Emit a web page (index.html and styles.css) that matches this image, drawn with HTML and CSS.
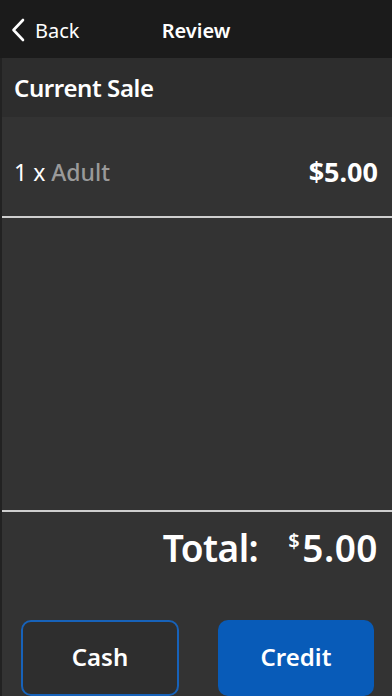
FILE: index.html
```html
<!DOCTYPE html>
<html lang="en">

<head>
    <meta charset="utf-8">
    <title>Review</title>
    <link rel="stylesheet" href="styles.css">
</head>

<body>
    <div class="screen">
        <!-- 顶部导航 -->
        <div class="navBar">
            <div class="back">
                <svg class="chevron" width="14" height="24" viewBox="0 0 14 24">
                    <path d="M12 2 L2.5 12 L12 22" fill="none" stroke="#fff" stroke-width="2.6" stroke-linecap="round" stroke-linejoin="round" />
                </svg>
                <span>Back</span>
            </div>
            <div class="title">Review</div>
        </div>
        <!-- 内容 -->
        <div class="content">
            <div class="saleHead">Current Sale</div>
            <div class="item">
                <div class="itemName">1 x <span class="type">Adult</span></div>
                <div class="itemPrice">$5.00</div>
            </div>
            <div class="spacer"></div>
            <div class="total">
                <span class="label">Total:</span>
                <span class="amount"><sup>$</sup>5.00</span>
            </div>
            <div class="buttons">
                <div class="btn cash">Cash</div>
                <div class="btn credit">Credit</div>
            </div>
        </div>
    </div>
</body>

</html>
```

FILE: styles.css
```css
* {
    margin: 0;
    padding: 0;
    box-sizing: border-box;
}

html,
body {
    width: 392px;
    height: 696px;
    overflow: hidden;
    background: #333;
    font-family: "Noto Sans", "Open Sans", sans-serif;
    color: #fff;
}

.screen {
    height: 696px;
    display: flex;
    flex-direction: column;
}

.navBar {
    height: 58px;
    background: #1b1b1b;
    position: relative;
    display: flex;
    align-items: center;
    flex-shrink: 0;
    padding-top: 2px;
}

.navBar .back {
    display: flex;
    align-items: center;
    padding-left: 11px;
    font-size: 20px;
    gap: 10px;
}

.navBar .title {
    position: absolute;
    left: 0;
    right: 0;
    text-align: center;
    font-size: 20px;
    font-weight: 600;
    pointer-events: none;
}

.content {
    flex: 1;
    display: flex;
    flex-direction: column;
    border-left: 2px solid #222;
}

.saleHead {
    height: 59px;
    background: #2d2d2d;
    padding-left: 12px;
    display: flex;
    align-items: center;
    font-size: 24px;
    font-weight: 600;
    letter-spacing: -0.4px;
}

.item {
    height: 101px;
    display: flex;
    align-items: center;
    justify-content: space-between;
    padding: 10px 14px 0 12px;
    border-bottom: 2px solid #cfcfcf;
    font-size: 23px;
}

.item .type {
    color: #9a9a9a;
    font-weight: 500;
}

.item .itemPrice {
    font-size: 27px;
    font-weight: 700;
}

.spacer {
    flex: 1;
    border-bottom: 2px solid #cfcfcf;
}

.total {
    height: 108px;
    display: flex;
    justify-content: flex-end;
    align-items: flex-start;
    padding: 10px 14px 0 0;
    font-size: 37px;
    font-weight: 600;
    letter-spacing: -0.5px;
}

.total .amount {
    margin-left: 30px;
    letter-spacing: 0.5px;
}

.total sup {
    font-size: 20px;
    vertical-align: 14px;
    margin-right: 2px;
}

.buttons {
    display: flex;
    justify-content: space-between;
    padding: 0 18px 0 19px;
    height: 76px;
}

.btn {
    width: 158px;
    height: 76px;
    border-radius: 10px;
    display: flex;
    align-items: center;
    justify-content: center;
    font-size: 24px;
    font-weight: 600;
    padding-bottom: 3px;
}

.btn.cash {
    border: 2px solid #1762b9;
    background: #2e2e2e;
}

.btn.credit {
    width: 156px;
    background: #085bb8;
}
```
